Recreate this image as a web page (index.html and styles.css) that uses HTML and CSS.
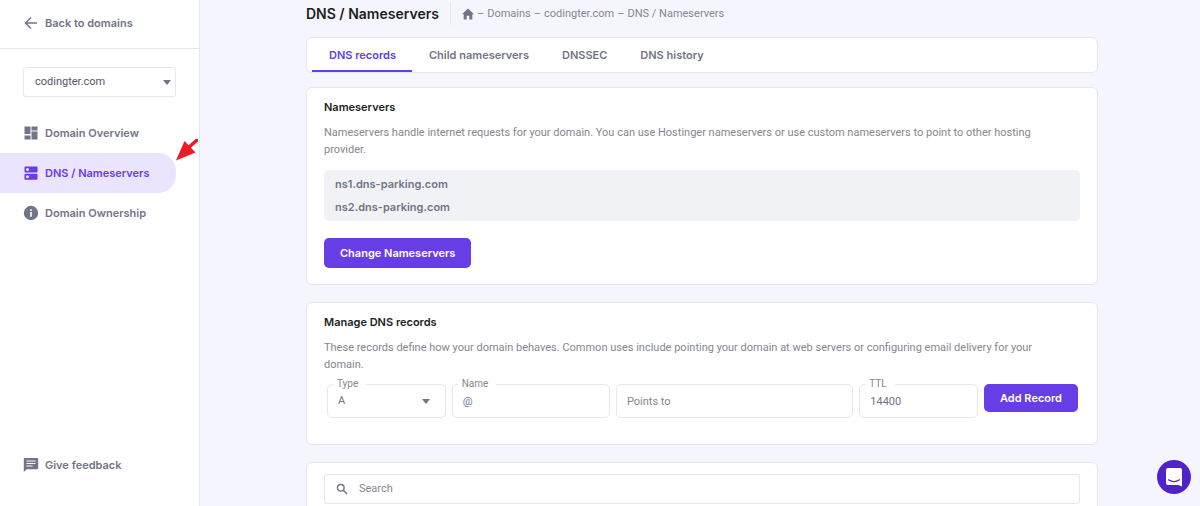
FILE: index.html
```
<!DOCTYPE html>
<html lang="en">
<head>
<meta charset="utf-8">
<meta name="viewport" content="width=device-width, initial-scale=1">
<title>DNS / Nameservers</title>
<link rel="stylesheet" href="styles.css">
</head>
<body>
<div class="app">
  <aside class="sidebar">
    <a class="back" href="#">
      <svg class="icon" viewBox="0 0 16 16" fill="none" stroke="currentColor" stroke-width="1.5"><path d="M14 8H3M8 2.500 2.500 8 8 13.500"/></svg>
      Back to domains
    </a>
    <div class="select-wrap domain-picker">
      <select class="select" aria-label="Domain"><option>codingter.com</option></select>
      <svg class="caret" viewBox="0 0 8 5"><path d="M0 0h8L4 5z"/></svg>
    </div>
    <nav class="nav">
      <a class="nav-item" href="#">
        <svg class="icon" viewBox="0 0 16 16" fill="currentColor"><path d="M1.500 1.500h6v7.500h-6zM8.500 1.500h6v4h-6zM8.500 6.500h6v8h-6zM1.500 10.500h6v4h-6z"/></svg>
        Domain Overview
      </a>
      <a class="nav-item active" href="#" aria-current="page">
        <svg class="icon" viewBox="0 0 16 16" fill="currentColor" fill-rule="evenodd"><path d="M2.200 1.500h11.600q.7 0 .7.7v4.600q0 .7-.7.7H2.200q-.7 0-.7-.7V2.200q0-.7.7-.7zM4.500 3a1.500 1.500 0 1 0 0 3 1.500 1.500 0 0 0 0-3zM2.200 8.800h11.600q.7 0 .7.7v4.600q0 .7-.7.7H2.200q-.7 0-.7-.7V9.500q0-.7.7-.7zM4.500 10.300a1.500 1.500 0 1 0 0 3 1.500 1.500 0 0 0 0-3z"/></svg>
        DNS / Nameservers
      </a>
      <a class="nav-item" href="#">
        <svg class="icon" viewBox="0 0 16 16" fill="currentColor" fill-rule="evenodd"><path d="M8 .8a7.200 7.200 0 1 0 0 14.400A7.200 7.200 0 0 0 8 .8zM7.200 4.300h1.600v1.600H7.200zM7.200 7.100h1.600v4.600H7.200z"/></svg>
        Domain Ownership
      </a>
    </nav>
    <a class="nav-item feedback" href="#">
      <svg class="icon" viewBox="0 0 16 16" fill="currentColor" fill-rule="evenodd"><path d="M2 1h12q1.200 0 1.200 1.200v8.900q0 1.200-1.200 1.200H3.800L.8 15V2.200Q.8 1 2 1zM3.500 3.500v1.100h9V3.500zM3.500 6v1.100h9V6zM3.500 8.500v1.100h6V8.500z"/></svg>
      Give feedback
    </a>
    <svg class="pointer" viewBox="0 0 22 23"><path d="M20.500 2.500 12 10" stroke="#ed1c24" stroke-width="3.500" stroke-linecap="round"/><path d="M0 22.500 8.500 3 19.500 14.500z" fill="#ed1c24"/></svg>
  </aside>

  <main class="main">
    <header class="page-head">
      <h1 class="page-title">DNS / Nameservers</h1>
      <nav class="crumbs" aria-label="Breadcrumb">
        <a class="crumb home" href="#" aria-label="Home"><svg class="home-icon" viewBox="0 0 12 12" fill="currentColor"><path d="M6 .5 12 6.200h-1.700V11.500H7.300V7.700H4.700v3.800H1.700V6.200H0z"/></svg></a>
        <span>–</span><a class="crumb" href="#">Domains</a><span>–</span><a class="crumb" href="#">codingter.com</a><span>–</span><span>DNS / Nameservers</span>
      </nav>
    </header>

    <nav class="tabs">
      <a class="tab selected" href="#">DNS records</a>
      <a class="tab" href="#">Child nameservers</a>
      <a class="tab" href="#">DNSSEC</a>
      <a class="tab" href="#">DNS history</a>
    </nav>

    <section class="card">
      <h2 class="card-title">Nameservers</h2>
      <p class="card-text">Nameservers handle internet requests for your domain. You can use Hostinger nameservers or use custom nameservers to point to other hosting provider.</p>
      <ul class="servers">
        <li>ns1.dns-parking.com</li>
        <li>ns2.dns-parking.com</li>
      </ul>
      <button class="button" type="button">Change Nameservers</button>
    </section>

    <section class="card">
      <h2 class="card-title">Manage DNS records</h2>
      <p class="card-text">These records define how your domain behaves. Common uses include pointing your domain at web servers or configuring email delivery for your domain.</p>
      <form class="record-form">
        <div class="field">
          <label class="field-label" for="type">Type</label>
          <select class="input" id="type"><option>A</option></select>
          <svg class="caret" viewBox="0 0 8 5"><path d="M0 0h8L4 5z"/></svg>
        </div>
        <div class="field">
          <label class="field-label" for="name">Name</label>
          <input class="input" id="name" type="text" value="@">
        </div>
        <div class="field">
          <input class="input" type="text" placeholder="Points to" aria-label="Points to">
        </div>
        <div class="field">
          <label class="field-label" for="ttl">TTL</label>
          <input class="input" id="ttl" type="text" value="14400">
        </div>
        <button class="button add" type="button">Add Record</button>
      </form>
    </section>

    <section class="card search-card">
      <label class="search">
        <svg class="search-icon" viewBox="0 0 12 12" fill="none" stroke="currentColor" stroke-width="1.400"><circle cx="4.800" cy="4.800" r="3.300"/><path d="M7.300 7.300 11 11"/></svg>
        <input class="search-input" type="search" placeholder="Search" aria-label="Search records">
      </label>
    </section>
  </main>
</div>
<button class="chat" type="button" aria-label="Open chat">
  <svg class="chat-icon" viewBox="0 0 18 20"><path d="M3 1h12q2 0 2 2v16.500L13.500 18H3q-2 0-2-2V3q0-2 2-2z" fill="#fff"/><path d="M3.500 12.800q5.500 3.800 11 0" fill="none" stroke="#4f22cc" stroke-width="1.200" stroke-linecap="round"/></svg>
</button>
</body>
</html>
```
FILE: styles.css
```
:root {
  --purple: #673de6;
  --gray: #727586;
  --light: #85878f;
  --dark: #1d1e20;
  --line: #e6e6ec;
  --page: #f4f5ff;
  --strong-font: Inter, "Liberation Sans", sans-serif;
  --text-font: Roboto, "Liberation Sans", sans-serif;
}

* { box-sizing: border-box; }

body {
  margin: 0;
  background: var(--page);
  color: var(--gray);
  font: 11px/16px var(--strong-font);
}

h1, h2, p, ul { margin: 0; padding: 0; }
a { color: inherit; text-decoration: none; }
input, select, button { font: inherit; color: inherit; }
svg { display: block; flex: none; }

.app { display: flex; height: 100vh; }

/* Sidebar */
.sidebar {
  position: relative;
  display: flex;
  flex-direction: column;
  flex: none;
  width: 200px;
  padding-bottom: 21px;
  background: #fff;
  border-right: 1px solid var(--line);
}
.icon { width: 16px; height: 16px; }
.back {
  display: flex;
  align-items: center;
  gap: 6px;
  padding: 15px 23px 17px;
  border-bottom: 1px solid var(--line);
  font-weight: 600;
}
.select-wrap { position: relative; }
.domain-picker { margin: 18px 23px 16px; }
.select {
  display: block;
  width: 100%;
  height: 30px;
  padding: 0 11px;
  appearance: none;
  background: #fff;
  border: 1px solid var(--line);
  border-radius: 3px;
  color: #55565f;
}
.caret {
  position: absolute;
  top: 50%;
  right: 5px;
  width: 8px;
  height: 5px;
  margin-top: -2px;
  fill: var(--gray);
  pointer-events: none;
}
.nav-item {
  display: flex;
  align-items: center;
  gap: 6px;
  height: 40px;
  margin-right: 23px;
  padding-left: 23px;
  border-radius: 0 18px 18px 0;
  font-weight: 600;
}
.nav-item.active { background: #ebe4ff; color: var(--purple); }
.feedback { margin-top: auto; }
.pointer {
  position: absolute;
  top: 138px;
  left: 176px;
  width: 22px;
  height: 23px;
}

/* Main column */
.main {
  flex: 1;
  min-width: 0;
  padding: 2px 102px 0 106px;
  overflow-y: auto;
  scrollbar-width: none;
}
.page-head {
  display: flex;
  align-items: center;
  margin-bottom: 12px;
}
.page-title {
  padding-right: 11px;
  border-right: 1px solid var(--line);
  color: var(--dark);
  font-size: 14px;
  line-height: 23px;
  font-weight: 600;
}
.crumbs {
  display: flex;
  align-items: center;
  gap: 3px;
  padding-left: 11px;
  color: var(--light);
}
.home { color: var(--gray); }
.home-icon { width: 12px; height: 12px; }

.tabs {
  display: flex;
  margin-bottom: 14px;
  padding: 0 5px;
  background: #fff;
  border: 1px solid var(--line);
  border-radius: 6px;
  font-weight: 600;
}
.tab {
  padding: 9px 16px 7px 17px;
  border-bottom: 2px solid transparent;
}
.tab.selected { border-color: var(--purple); color: var(--purple); }

/* Cards */
.card {
  margin-bottom: 17px;
  padding: 11px 17px 16px;
  background: #fff;
  border: 1px solid var(--line);
  border-radius: 6px;
}
.card-title {
  margin-bottom: 9px;
  color: var(--dark);
  font-size: 11px;
  font-weight: 600;
}
.card-text { padding-right: 28px; color: var(--light); line-height: 17px; }
.card-text, .crumbs, .select, .input, .search-input, .field-label { font-family: var(--text-font); }
.servers {
  display: grid;
  gap: 1px;
  margin: 12px 0 17px;
  padding: 3px 11px;
  background: #f1f2f6;
  border-radius: 5px;
  font-weight: 600;
  line-height: 22px;
  list-style: none;
}
.button {
  height: 30px;
  padding: 0 16px;
  background: var(--purple);
  border: 0;
  border-radius: 5px;
  color: #fff;
  font-weight: 600;
}
.record-form {
  display: grid;
  grid-template-columns: 3fr 4fr 6fr 3fr auto;
  gap: 6px;
  margin: 11px 0 10px;
  padding: 0 2px 0 3px;
}
.field { position: relative; min-width: 0; }
.field-label {
  position: absolute;
  top: -8px;
  left: 6px;
  padding: 0 8px 0 4px;
  background: #fff;
  color: var(--light);
  font-size: 10px;
}
.input {
  display: block;
  width: 100%;
  height: 34px;
  padding: 0 10px;
  appearance: none;
  background: #fff;
  border: 1px solid var(--line);
  border-radius: 5px;
}
.input::placeholder, .search-input::placeholder { color: var(--light); opacity: 1; }
.field .caret { right: 16px; }
.add { height: 28px; }

.search-card { min-height: 120px; }
.search {
  display: flex;
  align-items: center;
  gap: 11px;
  height: 30px;
  padding: 0 11px;
  border: 1px solid var(--line);
  border-radius: 3px;
}
.search-icon { width: 12px; height: 12px; }
.search-input {
  flex: 1;
  min-width: 0;
  padding: 0;
  background: none;
  border: 0;
  appearance: none;
}

.chat {
  position: fixed;
  right: 9px;
  bottom: 12px;
  display: grid;
  place-items: center;
  width: 34px;
  height: 34px;
  padding: 0;
  background: #4f22cc;
  border: 0;
  border-radius: 50%;
}
.chat-icon { width: 18px; height: 20px; }
```
